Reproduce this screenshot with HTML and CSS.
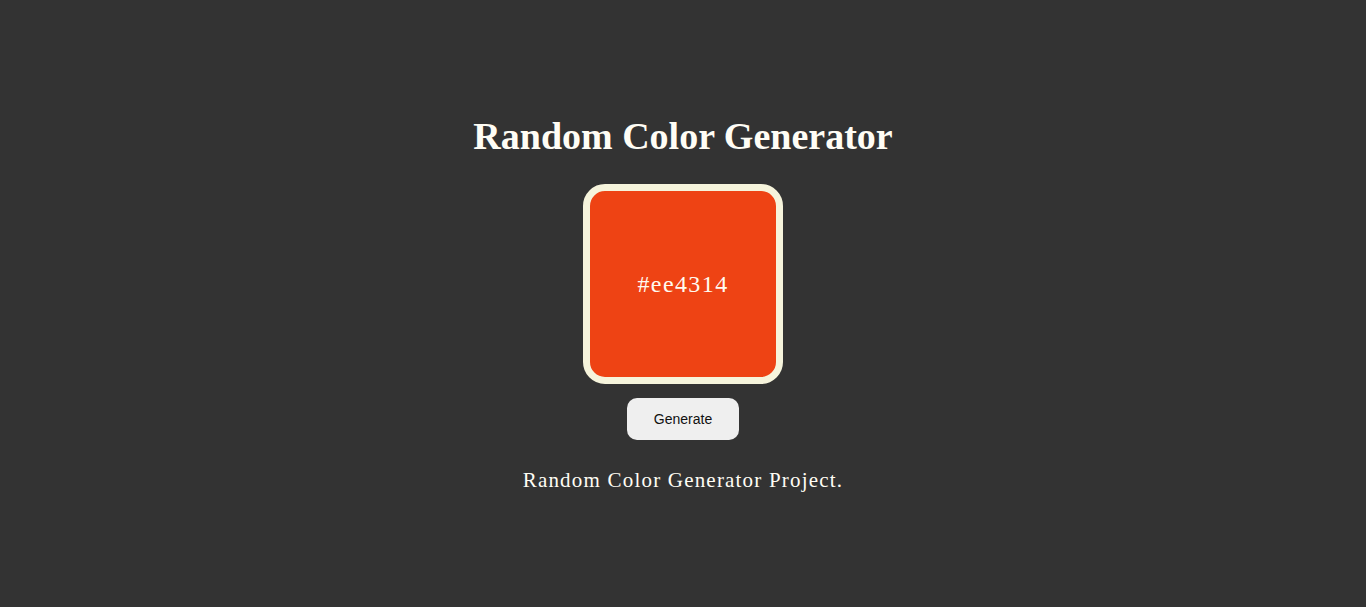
FILE: index.html
```html
<!DOCTYPE html>
<html lang="en">
<head>
<meta charset="utf-8">
<title>Random Color Generator</title>
<link rel="stylesheet" href="styles.css">
</head>
<body>
<main class="app">
  <h1 class="title">Random Color Generator</h1>
  <div class="swatch" style="background-color:#ee4314">
    <span class="hex">#ee4314</span>
  </div>
  <button class="btn" type="button">Generate</button>
  <p class="footer">Random Color Generator Project.</p>
</main>
</body>
</html>
```
FILE: styles.css
```css
html, body {
  margin: 0;
  padding: 0;
  height: 100%;
}
body {
  background: #333333;
  color: #fffdf5;
  font-family: "Liberation Serif", "DejaVu Serif", serif;
}
.app {
  display: flex;
  flex-direction: column;
  align-items: center;
  padding-top: 112px;
}
.title {
  margin: 0;
  font-size: 38px;
  font-weight: 700;
  line-height: 48px;
}
.swatch {
  margin-top: 24px;
  width: 186px;
  height: 186px;
  border: 7px solid #f6f4dc;
  border-radius: 22px;
  display: flex;
  align-items: center;
  justify-content: center;
}
.hex {
  font-size: 24px;
  letter-spacing: 1.4px;
  color: #fffaf0;
}
.btn {
  margin-top: 14px;
  width: 112px;
  height: 42px;
  border: none;
  border-radius: 10px;
  background: #efefef;
  color: #111;
  font-family: "Liberation Sans", Arial, sans-serif;
  font-size: 14px;
  padding: 0;
}
.footer {
  margin: 26px 0 0;
  font-size: 21px;
  letter-spacing: 1.2px;
  line-height: 28px;
}
```
